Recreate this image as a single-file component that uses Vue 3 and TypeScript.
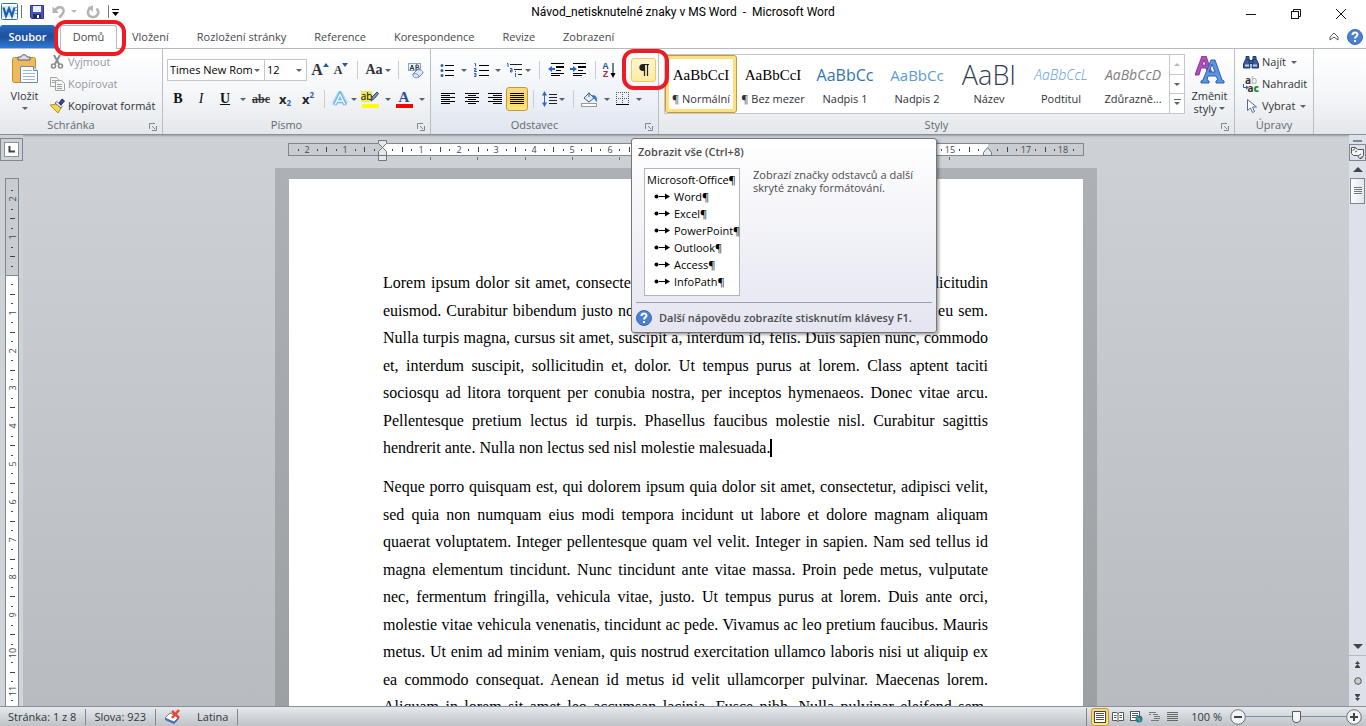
<script setup lang="ts">
import { ref } from 'vue'

const tabs: string[] = ['Vložení', 'Rozložení stránky', 'Reference', 'Korespondence', 'Revize', 'Zobrazení']

interface StyleCell {
  sample: string
  label: string
  kind: string
}
const styleCells: StyleCell[] = [
  { sample: 'AaBbCcI', label: '¶ Normální', kind: 'normal' },
  { sample: 'AaBbCcI', label: '¶ Bez mezer', kind: 'normal' },
  { sample: 'AaBbCc', label: 'Nadpis 1', kind: 'head1' },
  { sample: 'AaBbCc', label: 'Nadpis 2', kind: 'head2' },
  { sample: 'AaBI', label: 'Název', kind: 'title' },
  { sample: 'AaBbCcL', label: 'Podtitul', kind: 'subtitle' },
  { sample: 'AaBbCcD', label: 'Zdůrazně...', kind: 'emphasis' },
]

const apps: string[] = ['Word', 'Excel', 'PowerPoint', 'Outlook', 'Access', 'InfoPath']

const paragraphs: string[][] = [
  [
    'Lorem ipsum dolor sit amet, consectetuer adipiscing elit. Fusce aliquam suscipit sollicitudin',
    'euismod. Curabitur bibendum justo non orci. Morbi leo mi, nonummy eget, rhoncus eu sem.',
    'Nulla turpis magna, cursus sit amet, suscipit a, interdum id, felis. Duis sapien nunc, commodo',
    'et, interdum suscipit, sollicitudin et, dolor. Ut tempus purus at lorem. Class aptent taciti',
    'sociosqu ad litora torquent per conubia nostra, per inceptos hymenaeos. Donec vitae arcu.',
    'Pellentesque pretium lectus id turpis. Phasellus faucibus molestie nisl. Curabitur sagittis',
    'hendrerit ante. Nulla non lectus sed nisl molestie malesuada.',
  ],
  [
    'Neque porro quisquam est, qui dolorem ipsum quia dolor sit amet, consectetur, adipisci velit,',
    'sed quia non numquam eius modi tempora incidunt ut labore et dolore magnam aliquam',
    'quaerat voluptatem. Integer pellentesque quam vel velit. Integer in sapien. Nam sed tellus id',
    'magna elementum tincidunt. Nunc tincidunt ante vitae massa. Proin pede metus, vulputate',
    'nec, fermentum fringilla, vehicula vitae, justo. Ut tempus purus at lorem. Duis ante orci,',
    'molestie vitae vehicula venenatis, tincidunt ac pede. Vivamus ac leo pretium faucibus. Mauris',
    'metus. Ut enim ad minim veniam, quis nostrud exercitation ullamco laboris nisi ut aliquip ex',
    'ea commodo consequat. Aenean id metus id velit ullamcorper pulvinar. Maecenas lorem.',
    'Aliquam in lorem sit amet leo accumsan lacinia. Fusce nibh. Nulla pulvinar eleifend sem.',
  ],
]

interface Mark {
  pos: number
  label: string
  half: boolean
}
// One centimetre is 37.8 px; quarters get a dot, halves a dash, whole ones a number.
function marks(fromQuarter: number, toQuarter: number, origin: number): Mark[] {
  const list: Mark[] = []
  for (let q = fromQuarter; q <= toQuarter; q++) {
    if (q === 0 || q === 64) continue
    list.push({
      pos: Math.round(origin + (q * 37.8) / 4),
      label: q % 4 === 0 ? String(Math.abs(q / 4)) : '',
      half: Math.abs(q % 4) === 2,
    })
  }
  return list
}
const horizontal = marks(-9, 73, 95)
const vertical = marks(-9, 46, 97)
const tabStops: number[] = Array.from({ length: 12 }, (_, i) => Math.round(95 + (i + 1) * 47.2))
tabStops.push(661)

const zoom = ref(50)
const fontName = ref('Times New Rom')
const fontSize = ref('12')
</script>

<template>
  <div class="word">
    <header class="titlebar">
      <div class="quick">
        <svg class="logo" width="17" height="17" viewBox="0 0 17 17">
          <rect x="0.500" y="0.500" width="16" height="16" rx="1" fill="#fff" stroke="#2f6fb5" />
          <path d="M14 4.500h2M14 7.500h2M14 10.500h2" stroke="#7ba3cf" />
          <rect x="1" y="3" width="13" height="11" fill="#d8e8f8" />
          <path d="M2.500 4.500L5 13l3-7.500L11 13l2.500-8.500" fill="none" stroke="#1c5fae" stroke-width="2.200" />
        </svg>
        <span class="qsep"></span>
        <button class="qbtn" aria-label="Uložit">
          <svg width="14" height="14" viewBox="0 0 14 14">
            <path d="M0.500 0.500h13v13h-12l-1-1z" fill="#4a55c4" stroke="#2c3690" />
            <rect x="3" y="1" width="8" height="6" fill="#e8f0fb" />
            <rect x="3" y="9" width="8" height="4" fill="#272c52" />
            <rect x="7" y="10" width="2" height="3" fill="#fff" />
          </svg>
        </button>
        <button class="qbtn undo" aria-label="Zpět">
          <svg width="14" height="14" viewBox="0 0 14 14">
            <path d="M0.500 1.500v6.500h6.500z" fill="#b4b4b4" />
            <path d="M3 5.500c3-5 9-4 8.500 0.500c0 3-2 4.500-4.500 6.500" fill="none" stroke="#b4b4b4" stroke-width="2.600" />
          </svg>
          <span class="arrow pale"></span>
        </button>
        <button class="qbtn" aria-label="Znovu">
          <svg width="14" height="14" viewBox="0 0 14 14">
            <path d="M10.500 3.500c4 4 0.500 9-4 8.500c-5-0.500-6-6-2.500-9" fill="none" stroke="#b4b4b4" stroke-width="2.600" />
            <path d="M7 0.500v6.500L2 2z" fill="#b4b4b4" />
          </svg>
        </button>
        <span class="qsep"></span>
        <button class="qmenu" aria-label="Přizpůsobit">
          <svg width="7" height="8" viewBox="0 0 7 8"><path d="M0 1.500h7" stroke="#000" /><path d="M0 4h7L3.500 8z" /></svg>
        </button>
      </div>
      <h1 class="caption">Návod_netisknutelné znaky v MS Word&nbsp; -&nbsp; Microsoft Word</h1>
      <div class="winbtns">
        <button aria-label="Minimalizovat"><svg width="12" height="12" viewBox="0 0 12 12"><path d="M1 6.500h10" stroke="#111" /></svg></button>
        <button aria-label="Obnovit">
          <svg width="12" height="12" viewBox="0 0 12 12" fill="none" stroke="#111"><rect x="1.500" y="3.500" width="7" height="7" /><path d="M3.500 3V1.500h7v7H9" /></svg>
        </button>
        <button aria-label="Zavřít"><svg width="12" height="12" viewBox="0 0 12 12"><path d="M1 1l10 10M11 1L1 11" stroke="#111" /></svg></button>
      </div>
    </header>

    <nav class="tabs">
      <button class="file">Soubor</button>
      <div class="homewrap">
        <button class="tab home">Domů</button>
        <span class="ring"></span>
      </div>
      <button v-for="t in tabs" :key="t" class="tab">{{ t }}</button>
      <span class="grow"></span>
      <button class="mini" aria-label="Minimalizovat pás karet">
        <svg width="10" height="10" viewBox="0 0 10 10"><path d="M1 5l4-4 4 4v3L5 5 1 8z" fill="#fff" stroke="#555" /></svg>
      </button>
      <button class="mini" aria-label="Nápověda">
        <svg class="help" width="16" height="16" viewBox="0 0 16 16">
          <circle cx="8" cy="8" r="7.500" fill="#4a80cf" stroke="#3a6ab5" />
          <path d="M5.500 6c0-3.500 5-3.200 5-.5c0 1.800-2.500 2-2.500 4M8 11v2" fill="none" stroke="#fff" stroke-width="2" />
        </svg>
      </button>
    </nav>

    <section class="ribbon">
      <div class="group clipboard">
        <div class="body clipbody">
          <button class="paste">
            <svg width="28" height="30" viewBox="0 0 28 30">
              <rect x="1.500" y="3.500" width="23" height="25" rx="2" fill="#efb95e" stroke="#c48a35" />
              <path d="M7 6V3h3c0-3 6-3 6 0h3v3z" fill="#d9dde2" stroke="#5d6269" />
              <path d="M9.500 12.500h13l4 4v12h-17z" fill="#fff" stroke="#6e87aa" />
              <path d="M22.500 12.500v4h4" fill="#dbe6f4" stroke="#6e87aa" />
              <path d="M12 16.500h9M12 19.500h12M12 22.500h12M12 25.500h12" stroke="#9db4d2" />
            </svg>
            <span>Vložit</span>
            <span class="arrow"></span>
          </button>
          <div class="stack">
            <button class="line off">
              <svg width="16" height="16" viewBox="0 0 16 16" fill="none" stroke="#8d8d8d" stroke-width="1.600">
                <path d="M5 1l5 9M11 1L6 10" stroke-width="2" /><circle cx="4.500" cy="12" r="2" /><circle cx="11.500" cy="12" r="2" />
              </svg>Vyjmout
            </button>
            <button class="line off">
              <svg width="16" height="16" viewBox="0 0 16 16" fill="#f6f6f6" stroke="#a2a2a2">
                <path d="M1.500 1.500h6l2 2v7h-8z" /><path d="M6.500 4.500h6l3 3v7h-9z" /><path d="M3 4.500h3M3 6.500h3M8 8.500h5M8 10.500h5M8 12.500h5" />
              </svg>Kopírovat
            </button>
            <button class="line">
              <svg width="16" height="16" viewBox="0 0 16 16">
                <path d="M1 7l6 6 2 2 3-5-4-4z" fill="#f5d44c" stroke="#b9902a" />
                <path d="M6 5l6 5 1-1.500-5-5z" fill="#fff" stroke="#667" />
                <path d="M10 5l3-4 2.500 2-3.500 4z" fill="#3a4a9c" stroke="#222c66" />
              </svg>Kopírovat formát
            </button>
          </div>
        </div>
        <div class="gtitle"><span>Schránka</span><button class="launch" aria-label="Další"><svg width="8" height="8" viewBox="0 0 8 8" fill="none" stroke="#7f868d"><path d="M0.500 6V0.500H6" /><path d="M3 3l3 3M7.500 3v4.500H3" /></svg></button></div>
      </div>

      <div class="group font">
        <div class="body rows">
          <div class="row">
            <div class="combo name">
              <select v-model="fontName" aria-label="Písmo"><option>Times New Rom</option></select><span class="arrow"></span>
            </div>
            <div class="combo size">
              <select v-model="fontSize" aria-label="Velikost písma"><option>12</option></select><span class="arrow"></span>
            </div>
            <button class="b w26 serif big">A<svg class="corner" width="6" height="4" viewBox="0 0 6 4"><path d="M0 4l3-4 3 4z" fill="#2c55a5" /></svg></button>
            <button class="b w16 serif mid">A<svg class="corner" width="6" height="4" viewBox="0 0 6 4"><path d="M0 0l3 4 3-4z" fill="#2c55a5" /></svg></button>
            <span class="vsep w16"></span>
            <button class="b w26 serif case">Aa<span class="arrow"></span></button>
            <span class="vsep w14"></span>
            <button class="b w20" aria-label="Vymazat formátování">
              <svg width="17" height="17" viewBox="0 0 17 17">
                <rect x="1.500" y="1.500" width="12" height="7" fill="#e6eefb" stroke="#8aa4cf" />
                <path d="M3 8l2-5 2 5M4 6.500h2M9 3v5h2c1.500 0 1.500-2.500 0-2.500H9h1.500c1.500 0 1.500-2.500 0-2.500z" fill="none" stroke="#333" />
                <path d="M6 12l4-4c4-1 6 1 6 3l-4 4c-3 2-7 0-6-3z" fill="#dfe8f5" stroke="#6d86ad" />
                <path d="M6 12c2-1 6 0 6 3" fill="none" stroke="#6d86ad" />
              </svg>
            </button>
          </div>
          <div class="row">
            <button class="b w22 serif bold">B</button>
            <button class="b w24 serif ital">I</button>
            <button class="b w24 serif under">U</button>
            <button class="b w12" aria-label="Podtržení"><span class="arrow"></span></button>
            <button class="b w24 serif strike">abc</button>
            <button class="b w24 script">x<sub>2</sub></button>
            <button class="b w22 script">x<sup>2</sup></button>
            <span class="vsep w10"></span>
            <button class="b w30" aria-label="Textové efekty">
              <svg width="18" height="16" viewBox="0 0 18 16">
                <path d="M3.500 13L9 3l5.500 10M6 10h6" fill="none" stroke="#b9dff7" stroke-width="6" stroke-linejoin="round" />
                <path d="M3.500 14L9 3l5.500 11M6 10h6" fill="none" stroke="#6fb0e2" stroke-width="3.600" />
                <path d="M4 13.500L9 3.500l5 10M6 10h6" fill="none" stroke="#f2faff" stroke-width="1.400" />
              </svg><span class="arrow"></span>
            </button>
            <button class="b w34 wide" aria-label="Zvýraznění">
              <span class="ink yellow"><span class="hl">ab</span><svg width="9" height="11" viewBox="0 0 9 11"><path d="M1 10l1-4 5-5 1.500 1.500-4 5z" fill="#7c93bd" stroke="#33466e" /></svg></span><span class="arrow"></span>
            </button>
            <button class="b w34 wide" aria-label="Barva písma"><span class="ink red">A</span><span class="arrow"></span></button>
          </div>
        </div>
        <div class="gtitle"><span>Písmo</span><button class="launch" aria-label="Další"><svg width="8" height="8" viewBox="0 0 8 8" fill="none" stroke="#7f868d"><path d="M0.500 6V0.500H6" /><path d="M3 3l3 3M7.500 3v4.500H3" /></svg></button></div>
      </div>

      <div class="group para">
        <div class="body rows">
          <div class="row">
            <button class="b w34 wide" aria-label="Odrážky">
              <svg width="15" height="14" viewBox="0 0 15 14"><path d="M5 2.500h9M5 7.500h9M5 12.500h9" stroke="#000" /><g fill="#2f5fb3"><circle cx="2" cy="2.500" r="1.500" /><circle cx="2" cy="7.500" r="1.500" /><circle cx="2" cy="12.500" r="1.500" /></g></svg>
              <span class="arrow"></span>
            </button>
            <button class="b w34 wide" aria-label="Číslování">
              <svg width="15" height="14" viewBox="0 0 15 14"><path d="M5 2.500h10M5 7.500h10M5 12.500h10" stroke="#000" /><path d="M0.500 0.500h1v3M0 5.500h2v1.500H0.500V8.500H3M0 10.500h2v3H0M0.500 12h1.500" fill="none" stroke="#2f5fb3" /></svg>
              <span class="arrow"></span>
            </button>
            <button class="b w29" aria-label="Víceúrovňový seznam">
              <svg width="17" height="16" viewBox="0 0 17 16"><path d="M4 2.500h12M8 7.500h8M12 12.500h4" stroke="#222" /><path d="M1 1.500h1V5M4 6.500h2V10H4.500V8H6M9.500 11v4M9.500 9v1" fill="none" stroke="#2f5fb3" /></svg>
              <span class="arrow"></span>
            </button>
            <span class="vsep w12"></span>
            <button class="b w22" aria-label="Zmenšit odsazení">
              <svg width="16" height="14" viewBox="0 0 16 14"><path d="M3 0.500h13M8 3.500h8M8 4.500h8M8 7.500h5M3 10.500h13M3 12.500h9" stroke="#000" /><path d="M0 6l4-3v2h3v2H4v2z" fill="#2f66c4" /></svg>
            </button>
            <button class="b w22" aria-label="Zvětšit odsazení">
              <svg width="16" height="14" viewBox="0 0 16 14"><path d="M3 0.500h13M8 3.500h8M8 4.500h8M8 7.500h5M3 10.500h13M3 12.500h9" stroke="#000" /><path d="M7 6L3 3v2H0v2h3v2z" fill="#2f66c4" /></svg>
            </button>
            <span class="vsep w12"></span>
            <button class="b w16 sort" aria-label="Seřadit">
              <span class="az"><span>A</span><span>Z</span></span>
              <svg width="6" height="15" viewBox="0 0 6 15"><path d="M3 0v12" stroke="#000" /><path d="M0.500 10h5L3 15z" /></svg>
            </button>
            <div class="pilcrowwrap">
              <button class="pilcrow" aria-label="Zobrazit vše">
                <svg width="12" height="14" viewBox="0 0 12 14"><path d="M11 1.500H5M6.500 1v12M9.500 1v12" fill="none" stroke="#222" stroke-width="1.200" /><path d="M6.500 1H5C0 1 0 8 5 8h1.500z" fill="#222" /></svg>
              </button>
              <span class="ring"></span>
              <div class="tip" role="tooltip">
                <strong class="tiptitle">Zobrazit vše (Ctrl+8)</strong>
                <div class="tipbody">
                  <div class="sample">
                    <div>Microsoft·Office¶</div>
                    <div v-for="a in apps" :key="a" class="item">
                      <svg width="16" height="7" viewBox="0 0 16 7"><circle cx="2.500" cy="3.500" r="2" /><path d="M5 3.500h7" stroke="#000" /><path d="M11 0.500l5 3-5 3z" /></svg>{{ a }}¶
                    </div>
                  </div>
                  <p>Zobrazí značky odstavců a další skryté znaky formátování.</p>
                </div>
                <div class="tipfoot">
                  <svg width="16" height="16" viewBox="0 0 16 16">
                    <circle cx="8" cy="8" r="7.500" fill="#4a80cf" stroke="#3a6ab5" />
                    <path d="M5.500 6c0-3.500 5-3.200 5-.5c0 1.800-2.500 2-2.500 4M8 11v2" fill="none" stroke="#fff" stroke-width="2" />
                  </svg>
                  <strong>Další nápovědu zobrazíte stisknutím klávesy F1.</strong>
                </div>
              </div>
            </div>
          </div>
          <div class="row">
            <button class="b w24" aria-label="Vlevo"><svg width="14" height="12" viewBox="0 0 14 12"><path d="M0 0.500h14M0 2.500h9M0 4.500h14M0 6.500h9M0 8.500h14M0 10.500h9" stroke="#000" /></svg></button>
            <button class="b w24" aria-label="Na střed"><svg width="14" height="12" viewBox="0 0 14 12"><path d="M0 0.500h14M3 2.500h8M0 4.500h14M3 6.500h8M0 8.500h14M3 10.500h8" stroke="#000" /></svg></button>
            <button class="b w22" aria-label="Vpravo"><svg width="14" height="12" viewBox="0 0 14 12"><path d="M0 0.500h14M5 2.500h9M0 4.500h14M5 6.500h9M0 8.500h14M5 10.500h9" stroke="#000" /></svg></button>
            <button class="b w22 on" aria-label="Do bloku"><svg width="14" height="12" viewBox="0 0 14 12"><path d="M0 0.500h14M0 2.500h14M0 4.500h14M0 6.500h14M0 8.500h14M0 10.500h14" stroke="#000" /></svg></button>
            <span class="vsep w10"></span>
            <button class="b w30" aria-label="Řádkování">
              <svg width="15" height="16" viewBox="0 0 15 16"><path d="M7 3.500h8M7 6.500h8M7 9.500h8M7 12.500h8" stroke="#222" /><path d="M2.500 3v10" stroke="#2f66c4" /><path d="M0 4.500L2.500 0 5 4.500zM0 11.500L2.500 16 5 11.500z" fill="#2f66c4" /></svg>
              <span class="arrow"></span>
            </button>
            <span class="vsep w10"></span>
            <button class="b w34 wide" aria-label="Stínování">
              <svg width="17" height="16" viewBox="0 0 17 16"><rect x="0.500" y="12.500" width="15" height="3" fill="#fff" stroke="#999" /><path d="M3 7l5-5 5 5-5 4z" fill="#e3ecf8" stroke="#44597e" /><path d="M8 6V1.500" stroke="#44597e" /><path d="M11 4c5 0 5 3 5 7c-2-1-2-4-4-4z" fill="#3a70c4" /></svg>
              <span class="arrow"></span>
            </button>
            <button class="b w34 wide" aria-label="Ohraničení">
              <svg width="14" height="14" viewBox="0 0 14 14" fill="none"><path d="M0.500 0v13M6.500 0v13M12.500 0v13M0 0.500h13M0 6.500h13" stroke="#555" stroke-dasharray="1 1" /><path d="M0 12.500h13" stroke="#000" /></svg>
              <span class="arrow"></span>
            </button>
          </div>
        </div>
        <div class="gtitle"><span>Odstavec</span><button class="launch" aria-label="Další"><svg width="8" height="8" viewBox="0 0 8 8" fill="none" stroke="#7f868d"><path d="M0.500 6V0.500H6" /><path d="M3 3l3 3M7.500 3v4.500H3" /></svg></button></div>
      </div>

      <div class="group styles">
        <div class="body stylebody">
          <div class="gallery">
            <button v-for="(c, i) in styleCells" :key="c.label" class="cell" :class="{ chosen: i === 0 }">
              <span class="sampletext" :class="c.kind">{{ c.sample }}</span>
              <span class="celllabel">{{ c.label }}</span>
            </button>
            <div class="scroller">
              <button aria-label="Nahoru"><span class="arrow up pale"></span></button>
              <button aria-label="Dolů"><span class="arrow"></span></button>
              <button aria-label="Více"><span class="arrow more"></span></button>
            </div>
          </div>
          <button class="change">
            <svg width="30" height="28" viewBox="0 0 30 28">
              <path d="M0 19L7 0h4l6 17h-4l-2-5H6l-2 7zM7 9h4L9 4z" fill="#b04fb8" stroke="#8a3394" />
              <path d="M6 27v-2l2-1L16 4h4l7 20 2 1v2h-8v-2l2-1-2-4h-8l-1 4 2 1v2zM14 16h6l-3-8z" fill="#5b95e3" stroke="#2c5fae" />
            </svg>
            <span>Změnit</span>
            <span class="two">styly<span class="arrow"></span></span>
          </button>
        </div>
        <div class="gtitle"><span>Styly</span><button class="launch" aria-label="Další"><svg width="8" height="8" viewBox="0 0 8 8" fill="none" stroke="#7f868d"><path d="M0.500 6V0.500H6" /><path d="M3 3l3 3M7.500 3v4.500H3" /></svg></button></div>
      </div>

      <div class="group edit">
        <div class="body stack">
          <button class="line">
            <svg width="16" height="14" viewBox="0 0 16 14" fill="#3a5d9c" stroke="#1f3a6e"><path d="M3 1.500h3v3H3zM10 1.500h3v3h-3zM2.500 4.500h4l0.500 8.500H0.500V9zM9.500 4.500h4l2 4.500v4H9z" /><path d="M6 5.500h4v3H6z" /><path d="M2 10.500h4M10 10.500h4" stroke="#b9cdee" stroke-width="2" /></svg>Najít<span class="arrow"></span>
          </button>
          <button class="line">
            <span class="repl"><span class="r1">a<i>b</i></span><span class="r2">a<b>c</b></span><svg width="6" height="6" viewBox="0 0 6 6"><path d="M0.500 0v3.500h3" fill="none" stroke="#2f5fb3" /><path d="M3 1.500v4l3-2z" fill="#2f5fb3" /></svg></span>Nahradit
          </button>
          <button class="line">
            <svg width="16" height="16" viewBox="0 0 16 16"><path d="M4.500 1.500v11l3-2.500 2 4.500 2-1-2-4.500h4z" fill="#fff" stroke="#53698f" /></svg>Vybrat<span class="arrow"></span>
          </button>
        </div>
        <div class="gtitle"><span>Úpravy</span></div>
      </div>
    </section>

    <main class="work">
      <div class="rail">
        <button class="tabsel" aria-label="Zarážka"><span><svg width="7" height="7" viewBox="0 0 7 7"><path d="M1.500 0v5.500H7" fill="none" stroke="#444" stroke-width="2" /></svg></span></button>
        <svg class="vruler" width="14" height="1200" viewBox="0 0 14 1200">
          <rect x="0.500" y="0.500" width="13" height="1300" fill="#c9cdd2" stroke="#7f8791" />
          <rect x="1" y="97" width="12" height="1200" fill="#fff" />
          <path d="M0 97.500h14" stroke="#7f8791" />
          <template v-for="m in vertical" :key="m.pos">
            <text v-if="m.label" :transform="`translate(11 ${m.pos}) rotate(-90)`" text-anchor="middle" class="num">{{ m.label }}</text>
            <rect v-else-if="m.half" x="5" :y="m.pos" width="5" height="1" fill="#444" />
            <rect v-else x="6" :y="m.pos" width="2" height="1" fill="#444" />
          </template>
        </svg>
      </div>

      <div class="desk">
        <svg class="hruler" width="796" height="24" viewBox="0 0 796 24">
          <rect x="0.500" y="5.500" width="795" height="12" fill="#c9cdd2" stroke="#7f8791" />
          <rect x="95" y="6" width="605" height="11" fill="#fff" />
          <template v-for="m in horizontal" :key="m.pos">
            <text v-if="m.label" :x="m.pos" y="15" text-anchor="middle" class="num">{{ m.label }}</text>
            <rect v-else-if="m.half" :x="m.pos" y="9" width="1" height="5" fill="#444" />
            <rect v-else :x="m.pos" y="11" width="1" height="2" fill="#444" />
          </template>
          <rect v-for="s in tabStops" :key="s" :x="s" y="19" width="1" height="3" fill="#6b7280" />
          <g fill="#e6e8ea" stroke="#70757b">
            <path d="M90.500 2.500h8v3l-4 4-4-4z" />
            <path d="M90.500 17.500v-4l4-4 4 4v4z" />
            <path d="M90.500 17.500h8v5h-8z" />
            <path d="M695.500 17.500v-3l4-5 4 5v3z" />
          </g>
        </svg>
        <div class="mount">
          <article class="page">
            <p v-for="(p, i) in paragraphs" :key="i">
              <span v-for="(l, j) in p" :key="j" class="textline" :class="{ last: i === 0 && j === 6 }">{{ l }}<i v-if="i === 0 && j === 6" class="caret"></i></span>
            </p>
          </article>
        </div>
      </div>

      <aside class="scroll">
        <span class="split"></span>
        <button class="rulerbtn" aria-label="Pravítko"><svg width="13" height="12" viewBox="0 0 13 12" fill="#f4f5f6" stroke="#555"><path d="M0.500 0.500h4l2 2h6v6l-2 3h-2l-2-3h-4l-2-2z" /><path d="M1.500 3.500l3-2M4 5l2-1M7 9l3-2M9.500 11l2-2" /></svg></button>
        <button class="sbtn" aria-label="Nahoru"><span class="arrow up dark"></span></button>
        <span class="thumb"><svg width="8" height="8" viewBox="0 0 8 8"><path d="M0 0.500h8M0 2.500h8M0 4.500h8M0 6.500h8" stroke="#70777f" /></svg></span>
        <span class="grow"></span>
        <button class="sbtn" aria-label="Dolů"><span class="arrow dark"></span></button>
        <button class="sbtn nav first" aria-label="Předchozí"><svg width="7" height="7" viewBox="0 0 7 7"><path d="M1 3l2.500-3L6 3zM1 6l2.500-3L6 6zM1 6h5v1H1z" fill="#444" /></svg></button>
        <button class="sbtn nav" aria-label="Procházet"><svg width="8" height="8" viewBox="0 0 8 8"><circle cx="4" cy="4" r="3.300" fill="#ccc" stroke="#555" /></svg></button>
        <button class="sbtn nav" aria-label="Další"><svg width="7" height="7" viewBox="0 0 7 7"><path d="M1 4l2.500 3L6 4zM1 1l2.500 3L6 1zM1 0h5v1H1z" fill="#444" /></svg></button>
      </aside>
    </main>

    <footer class="status">
      <button class="seg">Stránka: 1 z 8</button>
      <button class="seg">Slova: 923</button>
      <button class="seg lang">
        <svg width="17" height="15" viewBox="0 0 17 15"><path d="M1 9l5-5 9 4-5 5z" fill="#fff" stroke="#6c7f9c" /><path d="M1 9v2l9 4 5-5V8l-5 5z" fill="#3f6fc0" /><path d="M8 2l7 7M15 1L8 9" stroke="#e8492c" stroke-width="2.500" /></svg>Latina
      </button>
      <span class="grow"></span>
      <div class="views">
        <button class="on" aria-label="Rozložení při tisku"><svg width="12" height="12" viewBox="0 0 12 12"><rect x="0.500" y="0.500" width="11" height="11" fill="#fff" stroke="#444" /><path d="M2 2.500h8M2 4.500h8M2 6.500h8M2 8.500h8" stroke="#555" /></svg></button>
        <button aria-label="Čtení"><svg width="12" height="12" viewBox="0 0 12 12"><path d="M0.500 1.500h4l1.500 1 1.500-1h4v8H7l-1 1-1-1H0.500zM6 2.500v8" fill="#fff" stroke="#555" /><path d="M2 4.500h2.500M2 6.500h2.500M7.500 4.500H10M7.500 6.500H10" stroke="#555" /></svg></button>
        <button aria-label="Web"><svg width="13" height="12" viewBox="0 0 13 12"><rect x="0.500" y="0.500" width="9" height="9" fill="#fff" stroke="#555" /><path d="M2 2.500h6M2 4.500h6M2 6.500h4" stroke="#555" /><circle cx="9" cy="8" r="3.500" fill="#2d6fa8" /><path d="M7 7l2 1 1 2" stroke="#4caf50" stroke-width="2" fill="none" /></svg></button>
        <button aria-label="Osnova"><svg width="11" height="10" viewBox="0 0 11 10"><path d="M0 0.500h7M4 2.500h5M5 4.500h6M5 6.500h6M2 8.500h8M0 2.500h2" stroke="#777" /></svg></button>
        <button aria-label="Koncept"><svg width="11" height="10" viewBox="0 0 11 10"><path d="M0 0.500h11M0 2.500h11M0 4.500h11M0 6.500h11M0 8.500h11" stroke="#666" /></svg></button>
      </div>
      <span class="pct">100 %</span>
      <button class="round" aria-label="Oddálit"><svg width="16" height="16" viewBox="0 0 16 16"><circle cx="8" cy="8" r="7.300" fill="#f1f3f5" stroke="#6a717a" /><path d="M4 8h8" stroke="#444" stroke-width="2" /></svg></button>
      <input v-model.number="zoom" class="slider" type="range" min="0" max="100" aria-label="Lupa" />
      <button class="round" aria-label="Přiblížit"><svg width="16" height="16" viewBox="0 0 16 16"><circle cx="8" cy="8" r="7.300" fill="#f1f3f5" stroke="#6a717a" /><path d="M4 8h8M8 4v8" stroke="#444" stroke-width="2" /></svg></button>
    </footer>
  </div>
</template>

<style>
body {
  margin: 0;
  overflow: hidden;
}
</style>

<style scoped>
* {
  box-sizing: border-box;
}
.word {
  height: 100vh;
  display: flex;
  flex-direction: column;
  font: 11px/14px 'Open Sans', 'Noto Sans', sans-serif;
  color: #2e3238;
  background: #fff;
  overflow: hidden;
}
button {
  font: inherit;
  color: inherit;
  border: 0;
  padding: 0;
  margin: 0;
  background: none;
  display: flex;
  align-items: center;
  justify-content: center;
  white-space: nowrap;
}
svg {
  display: block;
  flex: none;
}
.grow {
  flex: 1;
}
.arrow {
  flex: none;
  width: 0;
  height: 0;
  border: 3px solid transparent;
  border-top-color: #5c6269;
  border-bottom: 0;
}
.arrow.pale {
  border-top-color: #b5b9be;
}
.arrow.up {
  border-top: 0;
  border-bottom: 3px solid #b5b9be;
}
.arrow.dark {
  border-width: 5px 5px 0;
  border-top-color: #444;
}
.arrow.up.dark {
  border-width: 0 5px 5px;
  border-bottom-color: #444;
}

/* title bar */
.titlebar {
  flex: none;
  height: 25px;
  display: grid;
  grid-template-columns: 1fr auto 1fr;
}
.quick {
  display: flex;
  align-items: center;
  height: 23px;
  padding-left: 1px;
}
.qsep {
  width: 1px;
  height: 13px;
  margin: 0 7px 0 3px;
  background: #777;
}
.qbtn {
  width: 15px;
  margin-right: 8px;
}
.qbtn.undo {
  width: 25px;
  gap: 5px;
}
.qbtn + .qsep {
  margin-left: 0;
}
.qmenu {
  margin-left: -4px;
}
.caption {
  margin: 0;
  font: 400 12px/25px Roboto, sans-serif;
  color: #000;
}
.winbtns {
  display: flex;
  justify-content: flex-end;
  padding-right: 3px;
}
.winbtns button {
  width: 45px;
  height: 28px;
}

/* tab strip */
.tabs {
  flex: none;
  height: 24px;
  display: flex;
  border-bottom: 1px solid #b6babf;
  position: relative;
  z-index: 3;
}
.file {
  width: 55px;
  background: linear-gradient(#2a6bc4, #1d4f9c 50%, #2f7ad6);
  color: #fff;
  font-weight: 600;
  border-radius: 3px 3px 0 0;
}
.homewrap {
  position: relative;
  width: 57px;
  margin: 0 1px 0 5px;
}
.tab {
  padding: 0 14px;
  color: #45484d;
}
.tab.home {
  width: 100%;
  height: 24px;
  padding: 0 0 2px;
  border: 1px solid #b6babf;
  border-bottom: 0;
  border-radius: 3px 3px 0 0;
  background: #fff;
}
.ring {
  position: absolute;
  inset: -5px -9px -8px -6px;
  border: 4px solid #ed1c24;
  border-radius: 12px;
  pointer-events: none;
}
.mini {
  width: 20px;
  margin-right: 1px;
}

/* ribbon */
.ribbon {
  flex: none;
  height: 86px;
  display: flex;
  background: linear-gradient(#fff, #f6f7f9 50%, #e4e7eb);
  border-bottom: 1px solid #8b9199;
  position: relative;
  z-index: 2;
}
.group {
  flex: none;
  display: flex;
  flex-direction: column;
  border-right: 1px solid #b9bec4;
}
.clipboard {
  width: 163px;
}
.font {
  width: 268px;
}
.para {
  width: 228px;
  background: linear-gradient(#fff, #edf1f8 60%, #dfe5ee);
}
.styles {
  flex: 0 1 576px;
}
.edit {
  width: 79px;
}
.body {
  flex: 1;
}
.gtitle {
  height: 16px;
  display: flex;
  justify-content: center;
  position: relative;
  color: #65696f;
  padding-right: 20px;
}
.edit .gtitle {
  padding: 0;
}
.launch {
  position: absolute;
  right: 5px;
  top: 5px;
}
.clipbody {
  display: flex;
}
.paste {
  width: 49px;
  flex-direction: column;
  justify-content: flex-start;
  padding-top: 5px;
}
.paste > span:not(.arrow) {
  margin: 5px 0 4px;
}
.stack {
  display: flex;
  flex-direction: column;
  padding-top: 2px;
}
.line {
  height: 22px;
  justify-content: flex-start;
  gap: 3px;
}
.line .arrow {
  margin-left: 2px;
}
.off {
  color: #96999d;
}
.edit .body {
  padding-left: 8px;
}
.rows {
  display: flex;
  flex-direction: column;
  gap: 5px;
  padding: 9px 0 0 4px;
}
.para .rows {
  padding-left: 5px;
}
.row {
  display: flex;
  height: 24px;
}
.b {
  height: 24px;
  position: relative;
  gap: 2px;
}
.b.wide {
  gap: 6px;
}
.w10 { width: 10px; }
.w12 { width: 12px; }
.w14 { width: 14px; }
.w16 { width: 16px; }
.w20 { width: 20px; }
.w22 { width: 22px; }
.w24 { width: 24px; }
.w26 { width: 26px; }
.w29 { width: 29px; }
.w30 { width: 30px; }
.w34 { width: 34px; }
.vsep {
  display: flex;
  justify-content: center;
  padding: 3px 0;
}
.vsep::before {
  content: '';
  width: 1px;
  background: #c9cdd2;
}
.combo {
  height: 22px;
  margin-top: 1px;
  border: 1px solid #c3c7cc;
  background: #fff;
  display: flex;
  align-items: center;
  padding-right: 4px;
}
.combo select {
  flex: 1;
  min-width: 0;
  height: 100%;
  appearance: none;
  border: 0;
  outline: 0;
  padding: 0 0 0 2px;
  background: none;
  font: inherit;
  color: #000;
}
.name {
  width: 98px;
}
.size {
  width: 42px;
  border-left: 0;
}
.serif {
  font-family: 'Liberation Serif', serif;
  font-weight: 700;
  color: #333;
}
.big {
  font-size: 16px;
  gap: 0;
}
.mid {
  font-size: 12px;
  gap: 0;
}
.corner {
  align-self: flex-start;
  margin-top: 5px;
}
.case {
  font-size: 14px;
}
.bold,
.ital,
.under {
  font-size: 14px;
  color: #111;
}
.ital {
  font-style: italic;
  font-weight: 400;
}
.under {
  text-decoration: underline;
}
.strike {
  font-size: 12px;
  text-decoration: line-through;
}
.script {
  font-size: 13px;
  font-weight: 700;
  gap: 0;
  color: #222;
}
.script sub,
.script sup {
  font-size: 8px;
  line-height: 8px;
  color: #2f5fb3;
}
.script sub {
  margin-top: 8px;
}
.script sup {
  margin-bottom: 8px;
}
.ink {
  width: 17px;
  height: 17px;
  display: flex;
  justify-content: center;
  line-height: 13px;
  border-bottom: 4px solid;
}
.ink.red {
  border-color: #f00;
  font: 700 15px/13px 'Liberation Serif', serif;
  color: #2b4f94;
}
.ink.yellow {
  border-color: #ff0;
}
.hl {
  height: 11px;
  font-size: 10px;
  line-height: 10px;
  color: #000;
  background: #f0e85a;
}
.ink svg {
  margin-left: -2px;
}
.az {
  display: flex;
  flex-direction: column;
  font: 700 9px/8px 'Liberation Sans', sans-serif;
  color: #2b4f94;
}
.az span + span {
  color: #a02c3c;
}
.sort {
  gap: 1px;
}
.on {
  border: 1px solid #c29b3d;
  border-radius: 3px;
  background: linear-gradient(#fdd98a, #ffd35a 50%, #ffe784);
}
.pilcrowwrap {
  position: relative;
  width: 25px;
  height: 24px;
  margin-left: 14px;
}
.pilcrow {
  width: 25px;
  height: 24px;
  border: 1px solid #f0cb58;
  border-radius: 3px;
  background: linear-gradient(#fef6d3, #fdeaa2);
}
.pilcrowwrap .ring {
  inset: -9px -13px -8px -9px;
  z-index: 2;
}

/* tooltip */
.tip {
  position: absolute;
  left: 0;
  top: 80px;
  width: 306px;
  height: 195px;
  display: flex;
  flex-direction: column;
  padding: 5px 4px 0 6px;
  border: 1px solid #767676;
  border-radius: 3px;
  background: linear-gradient(#fff, #e4e5f0);
  box-shadow: 2px 2px 3px rgba(0, 0, 0, 0.35);
  color: #4c4c4c;
}
.tip strong {
  font-weight: 600;
}
.tiptitle {
  line-height: 15px;
}
.tipbody {
  display: flex;
  gap: 13px;
  padding: 9px 0 0 6px;
}
.sample {
  flex: none;
  width: 96px;
  height: 128px;
  padding: 2px 0 0 2px;
  border: 1px solid #b5b5b5;
  background: #fff;
  color: #000;
  line-height: 17px;
  white-space: nowrap;
}
.item {
  display: flex;
  align-items: center;
  gap: 4px;
  padding-left: 7px;
}
.tipbody p {
  margin: 0;
  line-height: 13px;
}
.tipfoot {
  display: flex;
  align-items: center;
  gap: 7px;
  flex: 1;
  margin: 6px 0 0 -2px;
  border-top: 1px solid #9a9fb0;
  white-space: nowrap;
}

/* styles gallery */
.stylebody {
  display: flex;
  align-items: flex-start;
  padding: 5px 0 0 5px;
}
.gallery {
  flex: 0 1 521px;
  min-width: 0;
  height: 60px;
  display: flex;
  border: 1px solid #c3c7cc;
  background: #fff;
}
.cell {
  flex: 1 1 0;
  min-width: 0;
  height: 58px;
  flex-direction: column;
  padding: 4px 5px 0;
  border: 1px solid transparent;
}
.cell.chosen {
  border: 1px solid #c29b3d;
  border-radius: 3px;
  box-shadow: inset 0 0 0 3px #ffdf7e;
}
.sampletext {
  width: 100%;
  height: 28px;
  line-height: 28px;
  overflow: hidden;
  color: #000;
}
.celllabel {
  height: 22px;
  line-height: 20px;
}
.normal {
  font-family: 'Liberation Serif', serif;
  font-size: 15px;
}
.head1 {
  font-size: 16px;
  font-weight: 500;
  color: #2e74b5;
}
.head2 {
  font-size: 15px;
  color: #5b9bd5;
}
.title {
  font-size: 27px;
  font-weight: 300;
  color: #323e4f;
}
.subtitle {
  font-size: 14px;
  font-style: italic;
  color: #5b9bd5;
  font-weight: 300;
}
.emphasis {
  font-size: 14px;
  font-style: italic;
  color: #808080;
}
.scroller {
  flex: none;
  width: 15px;
  display: flex;
  flex-direction: column;
  border-left: 1px solid #c3c7cc;
}
.scroller button {
  flex: 1;
  width: 100%;
}
.scroller button + button {
  border-top: 1px solid #c3c7cc;
}
.more {
  position: relative;
}
.more::before {
  content: '';
  position: absolute;
  left: -3px;
  top: -6px;
  width: 7px;
  height: 1px;
  background: #5c6269;
}
.change {
  flex: 1;
  flex-direction: column;
}
.change > span {
  line-height: 13px;
}
.change svg {
  margin: 2px 0 5px;
}
.two {
  display: flex;
  align-items: center;
  gap: 3px;
}
.repl {
  position: relative;
  width: 16px;
  height: 16px;
  font: 700 10px/8px 'Open Sans', 'Noto Sans', sans-serif;
  color: #333;
  display: flex;
  flex-direction: column;
}
.repl i {
  color: #aaa;
  font-style: normal;
  font-weight: 400;
}
.repl b {
  color: #1c8a2c;
}
.r2 {
  align-self: flex-end;
}
.repl svg {
  position: absolute;
  left: 0;
  top: 8px;
}

/* workspace */
.work {
  flex: 1;
  min-height: 0;
  display: grid;
  grid-template-columns: 23px 1fr 17px;
  background: linear-gradient(#ced2d6, #b8bbbf);
  box-shadow: inset 0 2px 2px -1px #9aa0a7;
}
.rail {
  min-height: 0;
  overflow: hidden;
  background: linear-gradient(#cdd1d6, #d1d5da);
}
.tabsel {
  width: 23px;
  height: 23px;
  margin-top: 3px;
  border: 1px solid #7f8791;
}
.tabsel span {
  width: 15px;
  height: 15px;
  display: flex;
  align-items: center;
  justify-content: center;
  border: 1px solid #8b9199;
  background: #fff;
}
.vruler {
  margin: 17px 0 0 5px;
}
.num {
  font-size: 9px;
  fill: #45484d;
}
.desk {
  min-height: 0;
  overflow: hidden;
  display: flex;
  flex-direction: column;
  align-items: center;
}
.hruler {
  margin-top: 3px;
}
.mount {
  flex: none;
  margin-top: 6px;
  padding: 11px 14px 0;
  background: linear-gradient(#adb1b6, #9ca0a3 540px);
}
.page {
  width: 794px;
  height: 1123px;
  padding: 90px 95px 0 94px;
  background: #fff;
  color: #000;
  font: 16px/27px 'Liberation Serif', serif;
}
.page p {
  margin: 0 0 11px;
}
.textline {
  display: block;
  white-space: nowrap;
  text-align: justify;
  text-align-last: justify;
  line-height: 27px;
}
.textline:nth-child(odd) {
  line-height: 28px;
}
.textline.last {
  text-align-last: left;
}
.caret {
  display: inline-block;
  width: 2px;
  height: 18px;
  vertical-align: -4px;
  background: #000;
}
.scroll {
  display: flex;
  flex-direction: column;
  align-items: center;
  background: #dde2ea;
  min-height: 0;
}
.split {
  width: 9px;
  height: 2px;
  margin: 5px 0 2px;
  background: #7f8791;
}
.rulerbtn {
  width: 17px;
  height: 17px;
  border: 1px solid #7f8791;
}
.sbtn {
  width: 17px;
  height: 17px;
}
.thumb {
  width: 15px;
  height: 26px;
  display: flex;
  align-items: center;
  justify-content: center;
  border: 1px solid #7f8791;
  background: linear-gradient(90deg, #fff, #e3e6ea);
}
.first {
  border-top: 1px solid #b6babf;
}

/* status bar */
.status {
  flex: none;
  height: 20px;
  display: flex;
  align-items: center;
  padding-right: 4px;
  border-top: 1px solid #87919c;
  background: linear-gradient(#e6e9ec, #bfc3c8);
  color: #33373c;
}
.seg {
  height: 16px;
  padding: 0 9px 0 8px;
  border-right: 1px solid #7f8791;
}
.lang {
  gap: 16px;
}
.views {
  display: flex;
  align-items: center;
  padding-left: 4px;
  border-left: 1px solid #7f8791;
}
.views button {
  width: 18px;
  height: 18px;
}
.pct {
  margin: 0 8px 0 10px;
}
.round {
  width: 16px;
}
.slider {
  width: 100px;
  height: 16px;
  margin: 0;
  appearance: none;
  background: linear-gradient(#7d8fa8, #7d8fa8) center / 100% 1px no-repeat;
}
.slider::-webkit-slider-thumb {
  appearance: none;
  width: 9px;
  height: 12px;
  border: 1px solid #555c64;
  border-radius: 1px 1px 5px 5px;
  background: #f4f5f7;
}
</style>
